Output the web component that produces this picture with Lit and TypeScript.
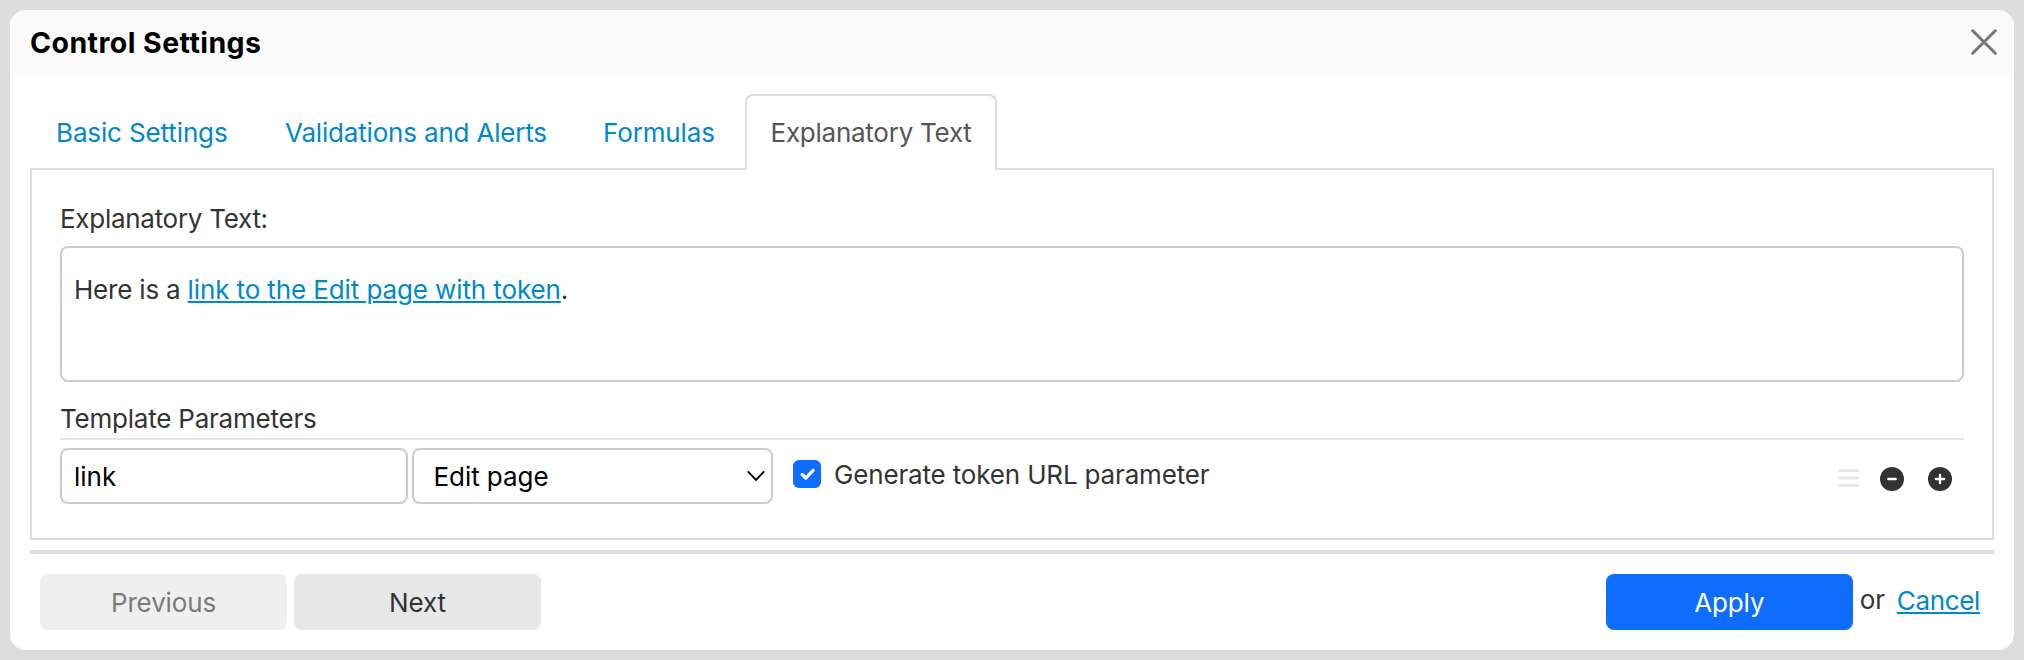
import { LitElement, html, css } from "lit";
import { customElement, state } from "lit/decorators.js";
import { classMap } from "lit/directives/class-map.js";

@customElement("app-root")
export class AppRoot extends LitElement {
  @state() private active = 3;

  private tabs = ["Basic Settings", "Validations and Alerts", "Formulas", "Explanatory Text"];

  static styles = css`
    :host {
      display: block;
      box-sizing: border-box;
      width: 100%;
      height: 660px;
      padding: 10px;
      background: #ddd;
      color: #333;
      font: 26px/36px Inter, "Liberation Sans", sans-serif;
      letter-spacing: -0.13px;
    }
    * { box-sizing: border-box; }
    svg { display: block; flex: none; }
    button {
      margin: 0;
      padding: 0;
      border: 0;
      background: none;
      color: inherit;
      font: inherit;
      letter-spacing: inherit;
    }
    a {
      color: #08c;
      text-decoration: underline;
      text-decoration-thickness: 2px;
      text-underline-offset: 2px;
    }

    .dialog {
      display: flex;
      flex-direction: column;
      height: 640px;
      border-radius: 16px;
      background: #fff;
      overflow: hidden;
    }
    .head {
      flex: none;
      display: flex;
      align-items: center;
      justify-content: space-between;
      height: 64px;
      padding: 2px 17px 0 20px;
      background: #fafafa;
    }
    .title {
      margin: 0;
      color: #000;
      font-size: 28.5px;
      font-weight: 700;
      line-height: 36px;
      letter-spacing: 0.43px;
      white-space: nowrap;
    }
    .close { margin-bottom: 2px; }

    .tabs {
      flex: none;
      display: grid;
      grid-template-columns: 230px 317px 168px 252px;
      height: 76px;
      margin: 20px 20px -2px;
      z-index: 1;
    }
    .tab {
      padding: 19px 0 19px 24px;
      border: 2px solid transparent;
      border-bottom: 0;
      color: #08c;
      text-align: left;
      white-space: nowrap;
      line-height: 36px;
    }
    .tab:nth-child(2) { padding-left: 23px; letter-spacing: -0.18px; }
    .tab.on {
      padding-left: 23.5px;
      border-color: #ddd;
      border-radius: 8px 8px 0 0;
      background: #fff;
      color: #555;
      letter-spacing: -0.25px;
    }

    .panel {
      flex: none;
      height: 372px;
      margin: 0 20px;
      padding: 31px 28px 0;
      border: 2px solid #ddd;
    }
    .label { height: 36px; letter-spacing: -0.28px; }
    .editor {
      height: 136px;
      margin-top: 9px;
      padding: 24px 12px 0;
      border: 2px solid #ccc;
      border-radius: 8px;
      letter-spacing: -0.2px;
    }
    .editor a { letter-spacing: -0.11px; }
    .legend {
      height: 58px;
      padding-top: 19px;
      border-bottom: 2px solid #e5e5e5;
      letter-spacing: -0.22px;
    }
    .row {
      display: flex;
      align-items: flex-start;
      height: 56px;
      margin-top: 8px;
    }
    .field {
      flex: none;
      display: flex;
      justify-content: space-between;
      width: 348px;
      height: 56px;
      padding: 9px 12px 0;
      border: 2px solid #ccc;
      border-radius: 8px;
      color: #000;
      letter-spacing: 0;
    }
    .select { width: 361px; margin-left: 4px; padding: 9px 6px 0 19.5px; letter-spacing: -0.06px; }
    .chevron { margin-top: 11px; }
    .check { margin: 12px 13px 0 20px; }
    .checklabel { padding-top: 9px; white-space: nowrap; letter-spacing: -0.16px; }
    .tools {
      display: flex;
      align-items: center;
      height: 24px;
      margin: 19px 12px 0 auto;
    }
    .grip { margin: -2px 21px 0 0; }
    .minus { margin-right: 24px; }

    .rule { flex: none; height: 4px; margin: 10px 20px 0; background: #dddcec; }
    .foot {
      flex: none;
      display: flex;
      align-items: flex-start;
      margin: 20px 30px 0;
    }
    .btn {
      flex: none;
      width: 247px;
      height: 56px;
      padding: 11px 0 9px;
      border-radius: 8px;
      background: #e7e7e7;
      color: #333;
      line-height: 36px;
      text-align: center;
    }
    .btn.off { background: #efefef; color: #7a7a7a; }
    .btn.next { margin-left: 7px; }
    .btn.apply { margin-left: auto; background: #0d6efd; color: #fff; }
    .or { margin: 8px 10px 0 7px; width: 27px; }
    .cancel { margin: 9px 4px 0 0; letter-spacing: -0.35px; }
  `;

  render() {
    return html`
      <div class="dialog">
        <header class="head">
          <h1 class="title">Control Settings</h1>
          <svg class="close" width="26" height="26" viewBox="0 0 26 26" fill="none" stroke="#777" stroke-width="3" stroke-linecap="round">
            <path d="M1.7 1.7 24.3 24.3M24.3 1.7 1.7 24.3" />
          </svg>
        </header>
        <nav class="tabs">
          ${this.tabs.map(
            (name, i) => html`<button class=${classMap({ tab: true, on: i === this.active })} @click=${() => (this.active = i)}>${name}</button>`
          )}
        </nav>
        <section class="panel">
          <div class="label">Explanatory Text:</div>
          <div class="editor">Here is a <a>link to the Edit page with token</a>.</div>
          <div class="legend">Template Parameters</div>
          <div class="row">
            <div class="field">link</div>
            <div class="field select">
              <span>Edit page</span>
              <svg class="chevron" width="18" height="12" viewBox="0 0 18 12" fill="none" stroke="#000" stroke-width="1.9">
                <path d="M.8 1.4 9 9.8l8.2-8.4" />
              </svg>
            </div>
            <svg class="check" width="28" height="28" viewBox="0 0 28 28">
              <rect width="28" height="28" rx="6" fill="#0d6efd" />
              <path d="M9.2 14.4l3.6 3.7 7.3-7.8" fill="none" stroke="#fff" stroke-width="3.3" stroke-linecap="round" stroke-linejoin="round" />
            </svg>
            <span class="checklabel">Generate token URL parameter</span>
            <div class="tools">
              <svg class="grip" width="21" height="18" viewBox="0 0 21 18" stroke="#e7e7e7" stroke-width="3" stroke-linecap="round">
                <path d="M1.5 1.5h18M1.5 9h18M1.5 16.5h18" />
              </svg>
              <svg class="minus" width="24" height="24" viewBox="0 0 24 24">
                <circle cx="12" cy="12" r="12" fill="#333" />
                <path d="M8.3 12h7.4" stroke="#fff" stroke-width="2.3" stroke-linecap="round" />
              </svg>
              <svg width="24" height="24" viewBox="0 0 24 24">
                <circle cx="12" cy="12" r="12" fill="#333" />
                <path d="M7.8 12h8.4M12 7.8v8.4" stroke="#fff" stroke-width="2.3" stroke-linecap="round" />
              </svg>
            </div>
          </div>
        </section>
        <div class="rule"></div>
        <footer class="foot">
          <button class="btn off">Previous</button>
          <button class="btn next">Next</button>
          <button class="btn apply">Apply</button>
          <span class="or">or</span>
          <a class="cancel">Cancel</a>
        </footer>
      </div>
    `;
  }
}
